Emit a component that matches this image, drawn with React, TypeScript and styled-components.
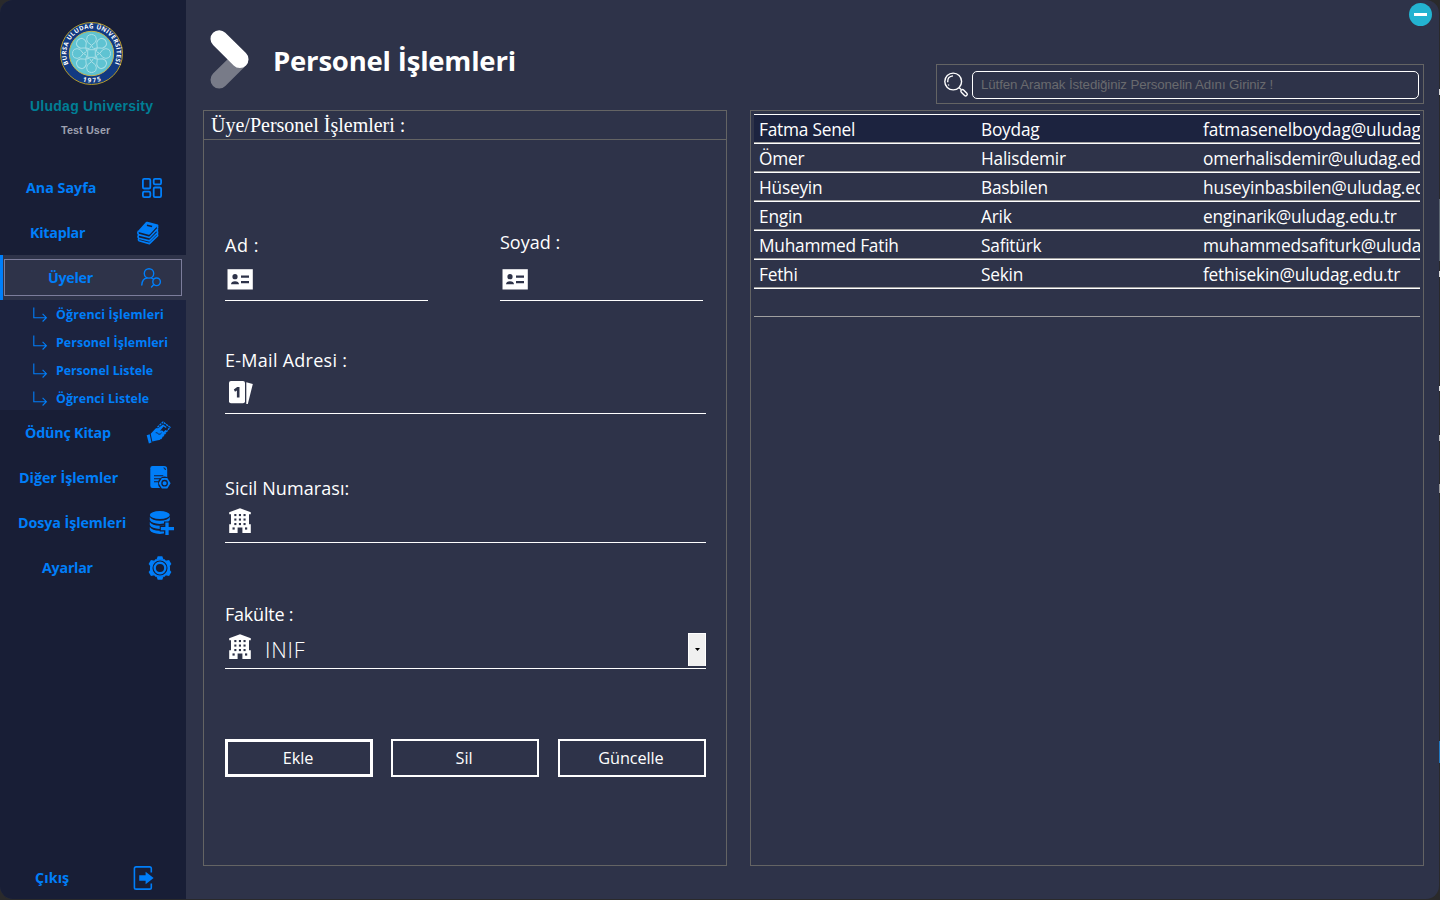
import React from 'react';
import styled, { createGlobalStyle } from 'styled-components';

const color = {
  side: '#181e36',
  main: '#2e3349',
  sub: '#1c233f',
  blue: '#007ef9',
  line: '#646464',
  desk: '#2a2a2b',
};

const Global = createGlobalStyle`
  * { box-sizing: border-box; }
  body { margin: 0; background: ${color.desk}; font-family: 'Open Sans', 'Noto Sans', sans-serif; color: #fff; }
  svg { display: block; flex: none; overflow: visible; }
  button, input { font: inherit; color: inherit; background: none; border: 0; padding: 0; margin: 0; outline: 0; }
`;

const Desktop = styled.div`
  position: relative;
  width: 1440px;
  height: 900px;
  overflow: hidden;
  background: ${color.desk};
`;
const Window = styled.div`
  display: flex;
  width: 1439px;
  height: 899px;
  border-radius: 13px;
  overflow: hidden;
  background: ${color.main};
`;
const Speck = styled.i<{ $top: number; $height: number; $color: string }>`
  position: absolute;
  right: 0;
  top: ${(p) => p.$top}px;
  width: 1px;
  height: ${(p) => p.$height}px;
  background: ${(p) => p.$color};
`;

/* Sidebar */
const Sidebar = styled.aside`
  display: flex;
  flex-direction: column;
  flex: none;
  width: 186px;
  height: 900px;
  background: ${color.side};
`;
const Brand = styled.header`
  display: flex;
  flex-direction: column;
  height: 165px;
  padding-top: 22px;
  font-family: 'Liberation Sans', sans-serif;
  font-weight: 700;
`;
const EmblemBox = styled.div`
  height: 64px;
  padding-left: 60px;
`;
const BrandName = styled.div`
  margin-top: 10px;
  padding-left: 30px;
  line-height: 20px;
  font-size: 14px;
  letter-spacing: 0.25px;
  white-space: nowrap;
  color: #007e95;
`;
const BrandUser = styled.div`
  margin-top: 7px;
  padding-left: 61px;
  line-height: 14px;
  font-size: 10.8px;
  letter-spacing: 0.1px;
  color: #9ea1b0;
`;
const NavItem = styled.button<{ $text: number; $icon: number; $track?: number }>`
  display: grid;
  grid-template-columns: ${(p) => p.$icon - p.$text}px auto;
  align-items: center;
  justify-content: start;
  flex: none;
  width: 186px;
  height: 45px;
  padding-left: ${(p) => p.$text}px;
  font-weight: 700;
  font-size: 14.3px;
  letter-spacing: ${(p) => p.$track ?? -0.1}px;
  text-align: left;
  white-space: nowrap;
  color: ${color.blue};
`;
const ActiveItem = styled.button`
  display: flex;
  align-items: center;
  flex: none;
  width: 186px;
  height: 45px;
  padding-left: 1px;
  border-left: 3px solid ${color.blue};
  background: ${color.main};
  color: ${color.blue};
  font-weight: 700;
  font-size: 14.3px;
  letter-spacing: -0.3px;
  text-align: left;
`;
const ActiveFrame = styled.span<{ $text: number; $icon: number }>`
  display: grid;
  grid-template-columns: ${(p) => p.$icon - p.$text}px auto;
  align-items: center;
  justify-content: start;
  width: 178px;
  height: 37px;
  padding-left: ${(p) => p.$text - 5}px;
  border: 1px solid #7c7d9b;
`;
const SubMenu = styled.div`
  flex: none;
  height: 110px;
  background: ${color.sub};
`;
const SubItem = styled.button<{ $track: number }>`
  display: flex;
  align-items: center;
  gap: 9px;
  width: 100%;
  height: 28px;
  padding-left: 33px;
  font-weight: 700;
  font-size: 12.4px;
  letter-spacing: ${(p) => p.$track}px;
  white-space: nowrap;
  color: ${color.blue};
`;
const Spacer = styled.div`
  flex: 1;
`;

/* Main area */
const Main = styled.main`
  display: flex;
  flex-direction: column;
  flex: none;
  width: 1253px;
  height: 899px;
`;
const TopBar = styled.header`
  display: flex;
  flex: none;
  height: 110px;
  padding-left: 24px;
`;
const TitleIcon = styled.div`
  padding-top: 30px;
  width: 63px;
`;
const Title = styled.h1`
  margin: 41px 0 0;
  width: 420px;
  line-height: 40px;
  font-size: 27.5px;
  font-weight: 700;
  letter-spacing: -0.2px;
  white-space: nowrap;
`;
const TopRight = styled.div`
  display: flex;
  flex-direction: column;
  align-items: flex-end;
  margin-left: auto;
  width: 503px;
  padding-top: 3px;
`;
const Minimize = styled.button`
  display: grid;
  place-items: center;
  width: 23px;
  height: 23px;
  margin-right: 7px;
  border-radius: 50%;
  background: #23b3d1;
`;
const Dash = styled.span`
  width: 13px;
  height: 3px;
  background: #fff;
`;
const Search = styled.div`
  display: flex;
  align-items: center;
  gap: 4px;
  margin: 38px 15px 0 0;
  width: 488px;
  height: 40px;
  padding: 0 4px 0 7px;
  border: 1px solid ${color.line};
`;
const SearchField = styled.div`
  flex: 1;
  height: 28px;
  margin-top: 1px;
  border: 1px solid #fff;
  border-radius: 5px;
  padding-left: 8px;
  line-height: 26px;
  font-family: 'Liberation Sans', sans-serif;
  font-size: 13.3px;
  letter-spacing: -0.11px;
  white-space: nowrap;
  color: #696a6e;
`;
const Content = styled.div`
  display: flex;
  gap: 23px;
  padding-left: 17px;
`;
const Panel = styled.section<{ $width: number }>`
  width: ${(p) => p.$width}px;
  height: 756px;
  border: 1px solid ${color.line};
`;
const PanelTitle = styled.h2`
  margin: 0;
  height: 29px;
  padding-left: 7px;
  border-bottom: 1px solid ${color.line};
  font: 400 20px/29px 'Liberation Serif', serif;
  letter-spacing: 0;
`;
const Form = styled.form`
  display: flex;
  flex-direction: column;
  padding-left: 21px;
`;
const FieldPair = styled.div`
  display: flex;
  gap: 72px;
  height: 161px;
  padding-top: 92px;
`;
const Field = styled.label<{ $width: number; $top?: number }>`
  display: block;
  flex: none;
  width: ${(p) => p.$width}px;
  margin-top: ${(p) => p.$top ?? 0}px;
`;
const FieldLabel = styled.span<{ $lift?: number; $track?: number }>`
  display: block;
  height: 24px;
  line-height: ${(p) => 24 - (p.$lift ?? 0) * 2}px;
  font-size: 18px;
  letter-spacing: ${(p) => p.$track ?? -0.15}px;
  white-space: nowrap;
`;
const Control = styled.span<{ $height: number; $icon: number }>`
  display: flex;
  align-items: flex-start;
  height: ${(p) => p.$height}px;
  padding: ${(p) => p.$icon}px 0 0 2px;
  border-bottom: 1px solid #fff;
`;
const SelectValue = styled.span`
  margin-left: 12px;
  line-height: 32px;
  font-size: 21.5px;
  font-weight: 300;
  letter-spacing: 0.8px;
`;
const SelectArrow = styled.span`
  display: grid;
  place-items: center;
  width: 18px;
  height: 33px;
  margin: -1px 0 0 auto;
  padding-bottom: 1px;
  background: #f0f0f0;
  border: solid #fff;
  border-width: 1px 1px 0 1px;
`;
const Actions = styled.div`
  display: grid;
  grid-template-columns: 166px 167px 148px;
  margin-top: 70px;
`;
const ActionButton = styled.button<{ $strong?: boolean }>`
  width: 148px;
  height: 38px;
  border: ${(p) => (p.$strong ? 3 : 2)}px solid #fff;
  padding-right: 2px;
  font-size: 16.3px;
  letter-spacing: -0.1px;
`;

/* Staff table */
const Table = styled.div`
  margin: 3px;
  width: 666px;
  overflow: hidden;
`;
const Row = styled.div<{ $selected?: boolean }>`
  display: grid;
  grid-template-columns: 222px 222px 222px;
  height: 29px;
  border-top: 1px solid #fff;
  border-bottom: 1px solid #a0a0a0;
  background: ${(p) => (p.$selected ? color.sub : 'transparent')};
`;
const Cell = styled.div<{ $track?: number }>`
  overflow: hidden;
  padding-left: 5px;
  line-height: 29px;
  font-size: 17.3px;
  letter-spacing: ${(p) => p.$track ?? -0.22}px;
  white-space: nowrap;
`;

const petals = [0, 45, 90, 135, 180, 225, 270, 315];

const Emblem = () => (
  <svg width="63" height="63" viewBox="-31.5 -31.5 63 63">
    <defs>
      <path id="arcTop" d="M-22.9 10.6A25.2 25.2 0 1 1 22.9 10.6" />
      <path id="arcLow" d="M-12 26.4A29 29 0 0 0 12 26.4" />
    </defs>
    <circle r="31" fill="#123a82" stroke="#b59b2a" strokeWidth="1" />
    <circle r="22.2" fill="#5fc3d2" stroke="#c5b450" strokeWidth="1" />
    <g fill="none" stroke="#a9dfe6" strokeWidth="1">
      {petals.map((a) => (
        <path
          key={a}
          transform={`rotate(${a})`}
          d="M-1.8 -5L0 -8.2L4 -11.4Q5.7 -14.4 4.1 -17.3Q0 -20.8 -4.1 -17.3Q-5.7 -14.4 -4 -11.4L0 -8.2L1.8 -5"
        />
      ))}
      <rect x="-3.8" y="-3.8" width="7.6" height="7.6" />
    </g>
    <text fontFamily="Open Sans, sans-serif" fontSize="6.2" fontWeight="700" fill="#fff">
      <textPath href="#arcTop" textLength="100" startOffset="0">BURSA ULUDAĞ ÜNİVERSİTESİ</textPath>
    </text>
    <text fontFamily="Open Sans, sans-serif" fontSize="6.3" fontWeight="700" fill="#fff">
      <textPath href="#arcLow" textLength="19" startOffset="3.3">1975</textPath>
    </text>
  </svg>
);

const DashboardIcon = () => (
  <svg width="20" height="20" fill="none" stroke={color.blue} strokeWidth="1.8">
    <rect x=".9" y=".9" width="7.4" height="9.6" rx="1.3" />
    <rect x="11.7" y=".9" width="7.4" height="5.4" rx="1.3" />
    <rect x=".9" y="13.7" width="7.4" height="5.4" rx="1.3" />
    <rect x="11.7" y="9.5" width="7.4" height="9.6" rx="1.3" />
  </svg>
);
const BooksIcon = () => (
  <svg width="22" height="24" viewBox="0 0 23 24">
    <path d="M9.4.4Q10 0 11 .3L21.8 3q.8.3.3 1L13.5 13.3q-.5.6-1.3.4L1.5 11q-1-.4-.3-1.3z" fill={color.blue} />
    <path d="M10.4 3.8l5.4 1.5" stroke={color.side} strokeWidth="1.6" />
    <path
      d="M1.5 9.8q-1.4 2 .1 3.9l11.4 3L21.6 7.5M21.8 3.9q-.9 1.8 0 3.5M1.6 14q-1.2 1.9.2 3.4L13 20.2l8.6-8.7q-.9-1.9 0-3.8M1.8 17.5q-.9 1.8.4 2.6l10.8 3 8.6-8.3q-.7-1.7 0-3.3"
      fill="none" stroke={color.blue} strokeWidth="1.7" strokeLinejoin="round"
    />
  </svg>
);
const MembersIcon = () => (
  <svg width="21" height="19" viewBox="0 0 21 19" fill="none" stroke={color.blue} strokeWidth="1.4" strokeLinecap="round">
    <circle cx="8" cy="5.4" r="4.7" />
    <path d="M.8 17Q1.3 10.4 6 10M10.4 10l2.1 1.2" />
    <circle cx="15.6" cy="13.8" r="3.8" />
    <path d="M12.8 16.5l-2.3 2.4" />
  </svg>
);
const LendIcon = () => (
  <svg width="25" height="23" viewBox="0 0 25 23">
    <path d="M11.5 6.3L17 1l7 5.3L14.5 18" fill="none" stroke={color.blue} strokeWidth="1.3" strokeDasharray="2.2 .7" />
    <path d="M17.3 4.5l2.9 2" stroke={color.blue} strokeWidth="1.5" />
    <path d="M.7 14.2l3-.9 1.8 8.2-2.6.9z" fill={color.blue} />
    <path d="M4.7 12.8L9.6 7.5q1.2-1 2.4-.2l5-3.7q1.4.2.8 1.6l-3.7 4.6q3.3-1 3.5 1.3l1.8-2.2q1.5.1 1 1.7l-5.5 7.3q-1.2 1.3-3 1.4l-5.6 1.3z" fill={color.blue} />
    <path d="M9.7 11.7q2.2-.4 2.9 1.6 2 .1 3-1.4" fill="none" stroke={color.side} strokeWidth=".8" />
  </svg>
);
const DocumentIcon = () => (
  <svg width="21" height="23" viewBox="0 0 21 23">
    <path d="M2.5 0H14q3.2 0 3.2 3.2V22H2.5Q.3 22 .3 19.8V2.2Q.3 0 2.5 0z" fill={color.blue} />
    <path d="M13.6 1.8q1.8.3 1.8 2.2M4 9.7h9.3M4 12.7h6M4 15.7h4.6" fill="none" stroke={color.side} strokeWidth="1.1" />
    <circle cx="14.6" cy="17.2" r="6.6" fill={color.side} />
    <path d="M11.9 12h5.4l3.3 5.2-3.3 5.2h-5.4l-3.3-5.2z" fill={color.blue} />
    <circle cx="14.6" cy="17.2" r="2.7" fill="none" stroke={color.side} strokeWidth="1.3" />
  </svg>
);
const DatabaseIcon = () => (
  <svg width="25" height="24" viewBox="0 0 25 24">
    <ellipse cx="10.8" cy="4" rx="10" ry="4" fill={color.blue} />
    {[6, 11, 16].map((y) => (
      <path key={y} d={`M.8 ${y}q2 3.5 10 3.7 8-.2 10-3.7v3q-1.9 3.7-10 3.9Q2.8 ${y + 6.7} .8 ${y + 3}z`} fill={color.blue} />
    ))}
    <path d="M18 10.4v14M10.7 17.5H25" stroke={color.side} strokeWidth="6" />
    <path d="M18 11.5v12.5M11.8 17.6H25" stroke={color.blue} strokeWidth="3.3" />
  </svg>
);
const GearIcon = () => (
  <svg width="24" height="24" viewBox="-12 -12 24 24">
    {[0, 60, 120, 180, 240, 300].map((a) => (
      <path key={a} d="M-3.6-8.3l1.3-3.5h4.6l1.3 3.5z" fill={color.blue} transform={`rotate(${a})`} />
    ))}
    <path d="M-4.7-8.7h9.4L10-1.6v3.2L4.7 8.7h-9.4L-10 1.6v-3.2z" fill={color.blue} />
    <circle r="7" fill="none" stroke={color.side} strokeWidth="1.1" />
    <circle r="4.1" fill={color.side} />
  </svg>
);
const ExitIcon = () => (
  <svg width="21" height="24" viewBox="0 0 21 24">
    <path d="M18.3 6.6V2.6Q18.3.9 16.6.9H3.1Q1.4.9 1.4 2.6v18.8q0 1.7 1.7 1.7h13.5q1.7 0 1.7-1.7v-4" fill="none" stroke={color.blue} strokeWidth="1.6" />
    <path d="M6.2 9.2h6.4V5.8l8 6.2-8 6.2v-3.4H6.2z" fill={color.blue} />
  </svg>
);
const BranchIcon = () => (
  <svg width="14" height="15" viewBox="0 0 14 15" fill="none" stroke={color.blue} strokeWidth="1.1">
    <path d="M.8.5v10.2h12.4M9.6 6.8l3.8 3.9-3.8 3.8" />
  </svg>
);
const ArrowLogo = () => (
  <svg width="39" height="59" viewBox="0 0 39 59" fill="none" strokeWidth="17.4" strokeLinecap="round">
    <path d="M9.2 49.8L29.6 29.6" stroke="#787b88" />
    <path d="M9.2 8.9L29.8 29.3" stroke="#fff" />
  </svg>
);
const SearchIcon = () => (
  <svg width="24" height="24" viewBox="0 0 24 24" fill="none" stroke="#fff" strokeWidth="1.4">
    <circle cx="9.2" cy="9.5" r="8.4" />
    <path d="M3.7 10.2Q3.3 4.4 9 3.9M4.3 12.5l.6 1M15.3 15.7l1.8 1.7" />
    <rect x="-1.6" y="-3.7" width="3.2" height="7.6" rx="1.5" transform="translate(20 20.6) rotate(-45)" />
  </svg>
);
const CardIcon = () => (
  <svg width="26" height="21" viewBox="0 0 26 21">
    <path d="M.5.2h25.3v20.3H.5z" fill="#fff" />
    <circle cx="8" cy="7.7" r="2.6" fill={color.main} />
    <path d="M4 15.2q.2-3 4-3t4 3zM14 6.4h8v2.3h-8zM14 11.9h8v2.3h-8z" fill={color.main} />
  </svg>
);
const NumberCardIcon = () => (
  <svg width="27" height="24" viewBox="0 0 27 24">
    <rect x="2" y="0" width="16" height="22.3" rx="2" fill="#fff" />
    <path d="M19.3 1.2l6.5 1.7-5 20.2h-1.5z" fill="#fff" />
    <path d="M6.8 8.6l3.4-2.6h2.3v10.4H9.9V9.4L8 10.8z" fill={color.main} />
  </svg>
);
const BuildingIcon = () => (
  <svg width="26" height="26" viewBox="0 0 26 26">
    <path d="M13 .2L23.8 4.3v2H22v10h1.8v8.7h-8.4v-5.5h-4.8V25H2.2v-8.7H4v-10H2.2v-2z" fill="#fff" />
    <g fill={color.main}>
      {[6, 10.5, 15].map((y) => [7.3, 11.9, 16.5].map((x) => <rect key={`${x}-${y}`} x={x} y={y} width="2.1" height="2.1" />))}
      <rect x="5.5" y="19.4" width="2.2" height="2.2" />
      <rect x="18" y="19.4" width="2.2" height="2.2" />
    </g>
  </svg>
);
const CaretIcon = () => (
  <svg width="5" height="3"><path d="M0 0h5L2.5 3z" fill="#000" /></svg>
);

const subItems: [string, number][] = [
  ['Öğrenci İşlemleri', 0.15],
  ['Personel İşlemleri', 0.06],
  ['Personel Listele', -0.04],
  ['Öğrenci Listele', 0.08],
];

const staff: { name: string; surname: string; mail: string; track?: number }[] = [
  { name: 'Fatma Senel', surname: 'Boydag', mail: 'fatmasenelboydag@uludag.edu.tr', track: -0.08 },
  { name: 'Ömer', surname: 'Halisdemir', mail: 'omerhalisdemir@uludag.edu.tr', track: -0.23 },
  { name: 'Hüseyin', surname: 'Basbilen', mail: 'huseyinbasbilen@uludag.edu.tr', track: -0.16 },
  { name: 'Engin', surname: 'Arik', mail: 'enginarik@uludag.edu.tr' },
  { name: 'Muhammed Fatih', surname: 'Safitürk', mail: 'muhammedsafiturk@uludag.edu.tr', track: -0.14 },
  { name: 'Fethi', surname: 'Sekin', mail: 'fethisekin@uludag.edu.tr' },
  { name: '', surname: '', mail: '' },
];

export default function App() {
  return (
    <Desktop>
      <Global />
      <Window>
        <Sidebar>
          <Brand>
            <EmblemBox><Emblem /></EmblemBox>
            <BrandName>Uludag University</BrandName>
            <BrandUser>Test User</BrandUser>
          </Brand>
          <NavItem $text={26} $icon={142} $track={0}>Ana Sayfa<DashboardIcon /></NavItem>
          <NavItem $text={30} $icon={137} $track={-0.25}>Kitaplar<BooksIcon /></NavItem>
          <ActiveItem>
            <ActiveFrame $text={48} $icon={141}>Üyeler<MembersIcon /></ActiveFrame>
          </ActiveItem>
          <SubMenu>
            {subItems.map(([text, track]) => (
              <SubItem key={text} $track={track}><BranchIcon />{text}</SubItem>
            ))}
          </SubMenu>
          <NavItem $text={25} $icon={146} $track={-0.2}>Ödünç Kitap<LendIcon /></NavItem>
          <NavItem $text={19} $icon={150} $track={-0.03}>Diğer İşlemler<DocumentIcon /></NavItem>
          <NavItem $text={18} $icon={149} $track={-0.08}>Dosya İşlemleri<DatabaseIcon /></NavItem>
          <NavItem $text={42} $icon={148} $track={-0.25}>Ayarlar<GearIcon /></NavItem>
          <Spacer />
          <NavItem $text={35} $icon={133} $track={0.1}>Çıkış<ExitIcon /></NavItem>
        </Sidebar>
        <Main>
          <TopBar>
            <TitleIcon><ArrowLogo /></TitleIcon>
            <Title>Personel İşlemleri</Title>
            <TopRight>
              <Minimize aria-label="Simge durumuna küçült"><Dash /></Minimize>
              <Search>
                <SearchIcon />
                <SearchField>Lütfen Aramak İstediğiniz Personelin Adını Giriniz !</SearchField>
              </Search>
            </TopRight>
          </TopBar>
          <Content>
            <Panel $width={524}>
              <PanelTitle>Üye/Personel İşlemleri :</PanelTitle>
              <Form>
                <FieldPair>
                  <Field $width={203}>
                    <FieldLabel $lift={-1} $track={0.6}>Ad :</FieldLabel>
                    <Control $height={45} $icon={13}><CardIcon /></Control>
                  </Field>
                  <Field $width={203}>
                    <FieldLabel $lift={2} $track={0}>Soyad :</FieldLabel>
                    <Control $height={45} $icon={13}><CardIcon /></Control>
                  </Field>
                </FieldPair>
                <Field $width={481} $top={47}>
                  <FieldLabel $track={0.27}>E-Mail Adresi :</FieldLabel>
                  <Control $height={42} $icon={9}><NumberCardIcon /></Control>
                </Field>
                <Field $width={481} $top={62}>
                  <FieldLabel $track={0.07}>Sicil Numarası:</FieldLabel>
                  <Control $height={43} $icon={8}><BuildingIcon /></Control>
                </Field>
                <Field $width={481} $top={59}>
                  <FieldLabel $track={-0.22}>Fakülte :</FieldLabel>
                  <Control $height={43} $icon={8}>
                    <BuildingIcon />
                    <SelectValue>INIF</SelectValue>
                    <SelectArrow><CaretIcon /></SelectArrow>
                  </Control>
                </Field>
                <Actions>
                  <ActionButton type="button" $strong>Ekle</ActionButton>
                  <ActionButton type="button">Sil</ActionButton>
                  <ActionButton type="button">Güncelle</ActionButton>
                </Actions>
              </Form>
            </Panel>
            <Panel $width={674}>
              <Table>
                {staff.map((s, i) => (
                  <Row key={i} $selected={i === 0}>
                    <Cell>{s.name}</Cell>
                    <Cell>{s.surname}</Cell>
                    <Cell $track={s.track}>{s.mail}</Cell>
                  </Row>
                ))}
              </Table>
            </Panel>
          </Content>
        </Main>
      </Window>
      <Speck $top={89} $height={6} $color="#d8d8d8" />
      <Speck $top={199} $height={62} $color="#5c6670" />
      <Speck $top={271} $height={6} $color="#d8d8d8" />
      <Speck $top={386} $height={5} $color="#e0e0e0" />
      <Speck $top={435} $height={6} $color="#bdbdbd" />
      <Speck $top={484} $height={9} $color="#9a9a9a" />
      <Speck $top={741} $height={22} $color="#1f78c0" />
    </Desktop>
  );
}
